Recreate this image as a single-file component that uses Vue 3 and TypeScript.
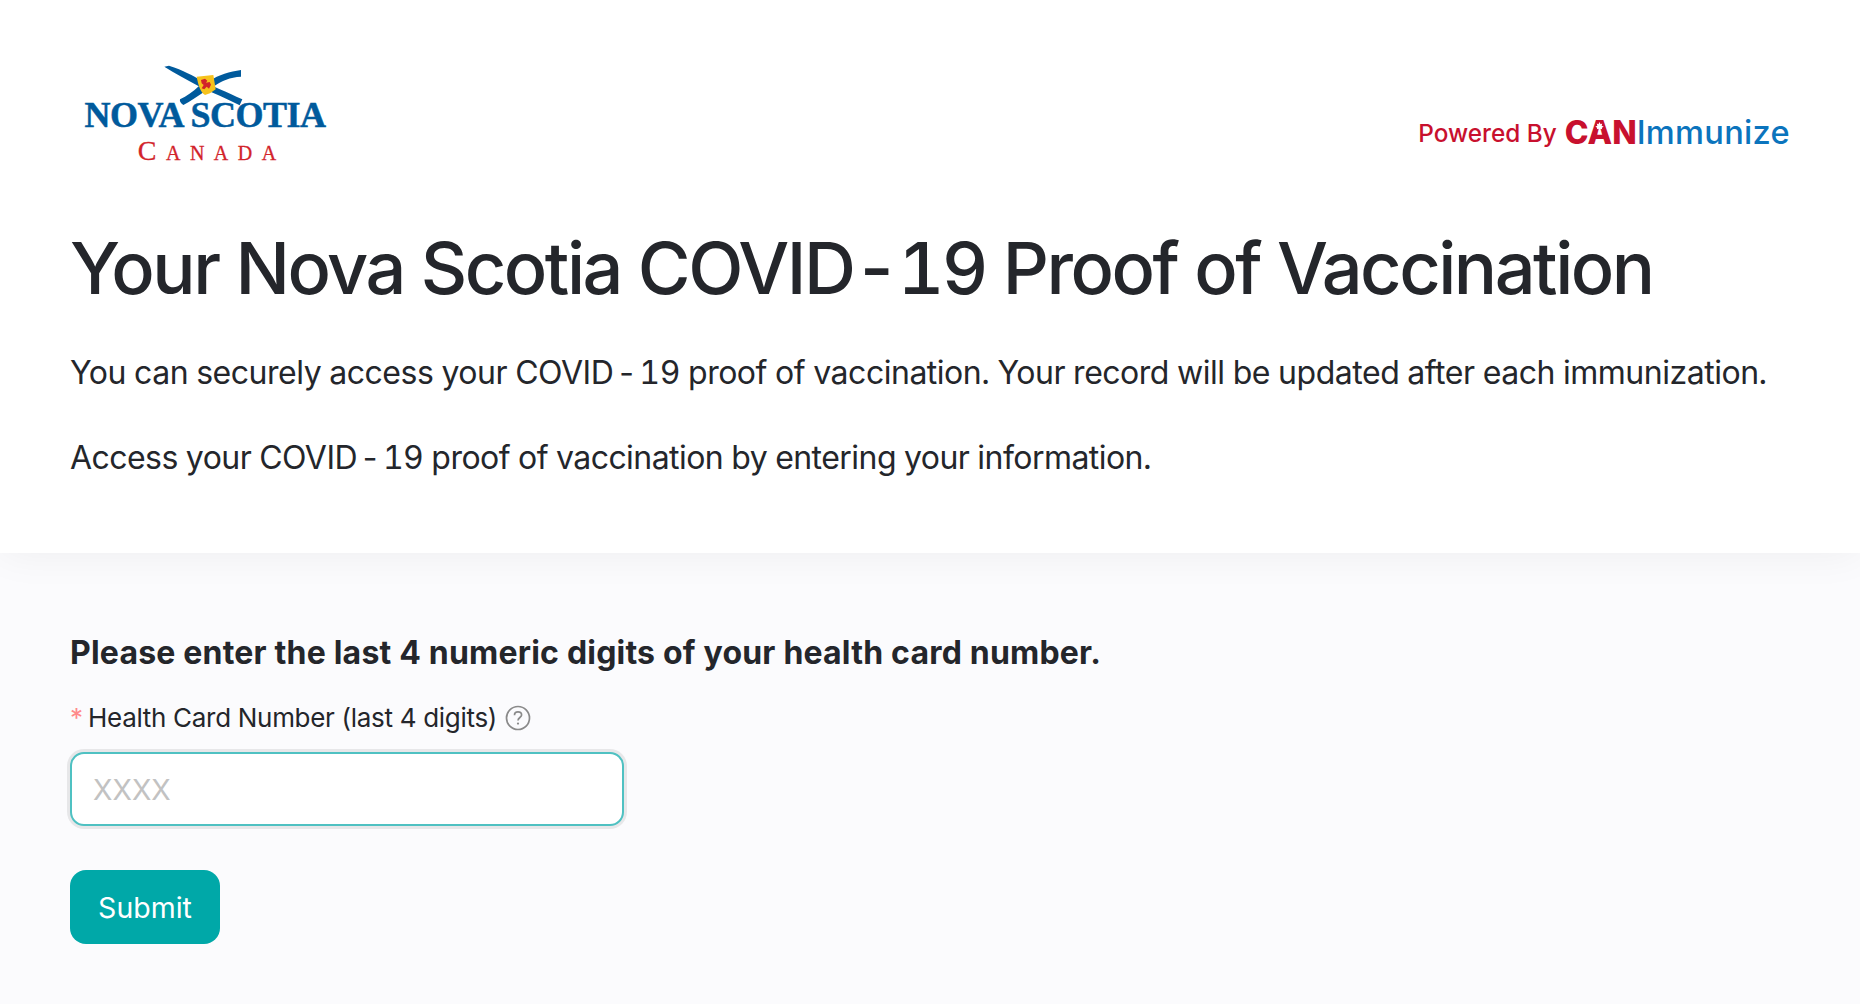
<script setup lang="ts">
</script>

<template>
  <div class="page">
    <section class="intro">
      <header class="top">
        <div class="logo">
          <svg class="flag" width="100" height="60" viewBox="0 0 300 180" aria-hidden="true">
            <path d="M28 20 L42 17 C85 30 115 48 140 62 C170 78 215 95 262 118 L254 136 C215 115 175 100 130 78 C95 58 60 40 28 20 Z" fill="#005a9c" />
            <path d="M258 30 L258 50 C225 52 200 62 178 78 L165 62 C190 45 225 35 258 30 Z" fill="#005a9c" />
            <path d="M132 78 L148 95 C125 110 105 125 85 135 C78 130 73 125 75 118 C95 108 115 95 132 78 Z" fill="#005a9c" />
            <path d="M125 50 L175 45 L182 88 L165 100 L150 105 C135 95 130 75 125 50 Z" fill="#f6c21c" />
            <path d="M138 60 L150 56 L157 62 L153 68 L164 66 L168 74 L162 86 L155 80 L148 88 L140 85 L146 75 L140 70 Z" fill="#d2232a" />
          </svg>
          <div class="logo-name">NOVA SCOTIA</div>
          <div class="logo-country">Canada</div>
        </div>
        <div class="powered">
          <span class="powered-by">Powered By</span>
          <span class="brand"><b>C<span class="leaf-a">A<svg class="leaf" width="9" height="9" viewBox="0 0 10 10" aria-hidden="true"><path d="M5 0 L6.2 2.4 L8 1.8 L7.4 4.4 L9.6 4.6 L7.6 6.6 L8 8 L5.4 7.6 L5.4 10 L4.6 10 L4.6 7.6 L2 8 L2.4 6.6 L.4 4.6 L2.6 4.4 L2 1.8 L3.8 2.4 Z" fill="#fff" /></svg></span>N</b><span class="imm">Immunize</span></span>
        </div>
      </header>
      <h1>Your Nova Scotia COVID-19 Proof of Vaccination</h1>
      <p>You can securely access your COVID<span class="hy">-</span>19 proof of vaccination. Your record will be updated after each immunization.</p>
      <p>Access your COVID<span class="hy">-</span>19 proof of vaccination by entering your information.</p>
    </section>
    <section class="form">
      <h2>Please enter the last 4 numeric digits of your health card number.</h2>
      <label class="label" for="hc">
        <span class="req">*</span>
        <span>Health Card Number (last 4 digits)</span>
        <svg class="help" width="26" height="26" viewBox="0 0 26 26" aria-hidden="true">
          <circle cx="13" cy="13" r="11.5" fill="none" stroke="#8a8a8a" stroke-width="1.7" />
          <path d="M9.5 10.2 C9.5 8 11 6.9 13 6.9 C15 6.9 16.6 8.1 16.6 10 C16.6 12.4 13 12.7 13 15.4" fill="none" stroke="#8a8a8a" stroke-width="1.7" />
          <circle cx="13" cy="18.6" r="1.1" fill="#8a8a8a" />
        </svg>
      </label>
      <input id="hc" class="input" type="text" placeholder="XXXX" />
      <button class="submit" type="button">Submit</button>
    </section>
  </div>
</template>

<style>
html, body { margin: 0; background: #fbfbfd; }
</style>

<style scoped>
.page {
  height: 1004px;
  overflow: hidden;
  display: flex;
  flex-direction: column;
  font-family: Inter, "Liberation Sans", sans-serif;
  color: #24262b;
  background: #fbfbfd;
}
.intro {
  background: #fff;
  height: 553px;
  box-sizing: border-box;
  padding: 57px 70px 0;
  flex: none;
  position: relative;
  z-index: 1;
  box-shadow: 0 0 40px rgba(0, 0, 0, 0.06);
}
.top {
  display: flex;
  justify-content: space-between;
  align-items: flex-end;
  height: 108px;
}
.logo {
  width: 246px;
  margin-left: 12px;
  display: flex;
  flex-direction: column;
  align-items: center;
  align-self: flex-start;
  position: relative;
  padding-top: 40px;
}
.flag {
  position: absolute;
  top: 3px;
  left: 73px;
}
.logo-name {
  font-family: "Liberation Serif", serif;
  font-weight: 700;
  font-size: 36px;
  line-height: 36px;
  letter-spacing: -0.5px;
  white-space: nowrap;
  color: #005a9c;
  -webkit-text-stroke: 0.5px #005a9c;
  position: relative;
}
.logo-country {
  font-family: "Liberation Serif", serif;
  font-size: 28px;
  line-height: 28px;
  margin-top: 4px;
  margin-left: 4px;
  letter-spacing: 9.5px;
  margin-right: -9.5px;
  font-variant: small-caps;
  color: #d2232a;
  white-space: nowrap;
  -webkit-text-stroke: 0.3px #d2232a;
}
.powered {
  margin-bottom: 13px;
  white-space: nowrap;
}
.powered-by {
  font-size: 24.3px;
  font-weight: 550;
  color: #c8102e;
  margin-right: 8px;
  vertical-align: 2px;
}
.brand {
  font-size: 32.6px;
  font-weight: 500;
  color: #0b74bd;
}
.imm {
  letter-spacing: 0.3px;
  font-weight: 550;
}
.brand b {
  font-size: 32px;
  font-weight: 800;
  color: #c8102e;
}
.leaf-a {
  position: relative;
}
.leaf {
  position: absolute;
  left: 50%;
  top: 9px;
  margin-left: -4.5px;
}
.hy {
  margin: 0 0.09em;
}
h1 {
  margin: 61px 0 0;
  font-size: 72px;
  line-height: 84px;
  font-weight: 500;
  letter-spacing: -2.48px;
  white-space: nowrap;
  font-variant-numeric: tabular-nums;
}
p {
  margin: 0;
  font-size: 32px;
  line-height: 48px;
  letter-spacing: -0.48px;
  white-space: nowrap;
  font-variant-numeric: tabular-nums;
}
h1 + p { margin-top: 39px; }
p + p { margin-top: 37px; letter-spacing: -0.55px; }
.form {
  flex: 1;
  padding: 77px 70px 0;
  display: flex;
  flex-direction: column;
  align-items: flex-start;
}
h2 {
  margin: 0;
  font-size: 32px;
  line-height: 46px;
  font-weight: 700;
  letter-spacing: 0.2px;
}
.label {
  margin-top: 22px;
  display: flex;
  align-items: center;
  font-size: 26px;
  line-height: 40px;
  letter-spacing: -0.3px;
}
.req {
  color: #ff8a8a;
  width: 18px;
  flex: none;
}
.help {
  margin-left: 8px;
}
.input {
  margin-top: 14px;
  width: 554px;
  height: 74px;
  box-sizing: border-box;
  border: 2px solid #4fc1c2;
  border-radius: 14px;
  background: #fff;
  box-shadow: 0 0 0 3px rgba(0, 0, 0, 0.08);
  padding: 0 21px;
  font: inherit;
  font-size: 28.5px;
  outline: none;
}
.input::placeholder { color: #c2c2c2; opacity: 1; }
.submit {
  margin-top: 44px;
  width: 150px;
  height: 74px;
  border: 0;
  border-radius: 16px;
  background: #00a8a8;
  color: #fff;
  font: inherit;
  font-size: 28.5px;
}
</style>
